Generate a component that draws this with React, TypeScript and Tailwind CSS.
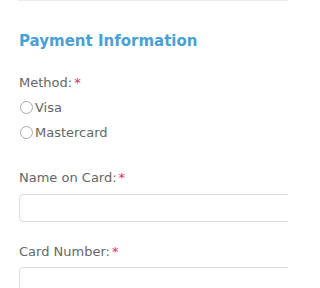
import React from "react";

function Radio({ label }: { label: string }) {
  return (
    <label className="flex items-center h-[25px]">
      <span className="w-[13px] h-[13px] rounded-full border border-[#aaaaaa] bg-white mr-[2px] ml-[1px]" />
      <span>{label}</span>
    </label>
  );
}

function Req() {
  return <span className="text-[#d1336b] ml-[2px]">*</span>;
}

export default function App() {
  return (
    <div
      className="w-[288px] h-[288px] overflow-hidden bg-white text-[#666666] text-[13px] leading-[16px]"
      style={{ fontFamily: '"DejaVu Sans", Verdana, sans-serif' }}
    >
      <div className="h-px bg-[#ececec] ml-[18px]" />
      <div className="pl-[19px]">
        <h2 className="mt-[30px] text-[15px] leading-[20px] font-bold text-[#4a9fd5]">
          Payment Information
        </h2>
        <div className="mt-[24px]">
          Method:<Req />
        </div>
        <div className="mt-[4px]">
          <Radio label="Visa" />
          <Radio label="Mastercard" />
        </div>
        <div className="mt-[25px]">
          Name on Card:<Req />
        </div>
        <div className="mt-[8px] w-[300px] h-[28px] rounded-[4px] border border-[#dddddd] bg-white" />
        <div className="mt-[22px]">
          Card Number:<Req />
        </div>
        <div className="mt-[7px] w-[300px] h-[28px] rounded-[4px] border border-[#dddddd] bg-white" />
      </div>
    </div>
  );
}
